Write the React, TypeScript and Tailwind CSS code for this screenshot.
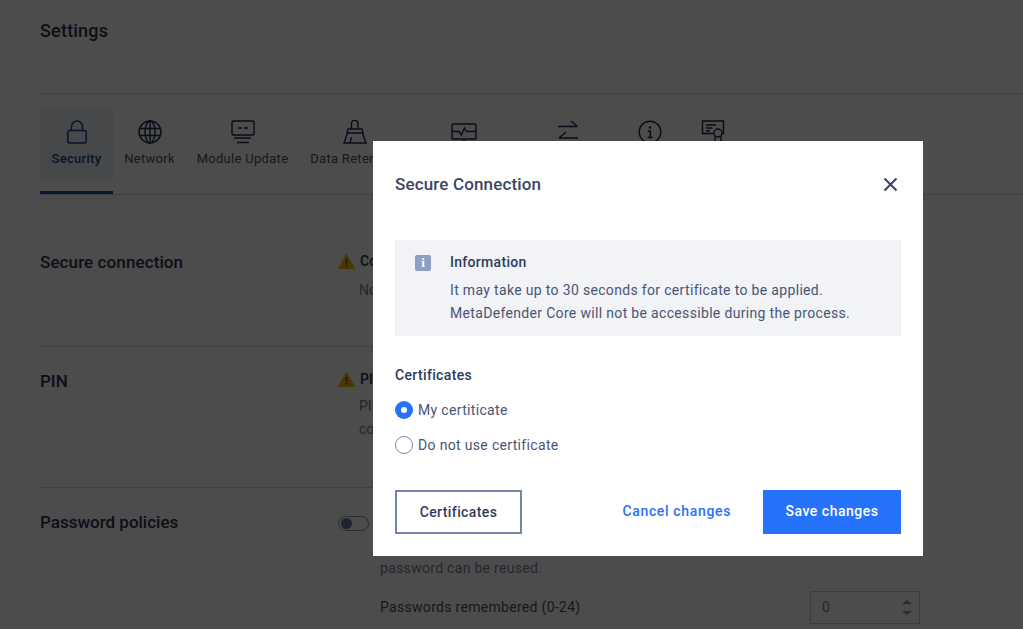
import type { ReactNode } from "react";

const font = "font-['Roboto',sans-serif]";

const LockIcon = () => (
  <svg width="24" height="24" viewBox="0 0 24 24" fill="none" stroke="currentColor" strokeWidth="1.5">
    <rect x="2.75" y="10.5" width="18.5" height="12.5" rx="2" />
    <path d="M6.5 10.5V6.500a5.500 5.500 0 0 1 11 0v4" />
  </svg>
);

const GlobeIcon = () => (
  <svg width="24" height="24" viewBox="0 0 24 24" fill="none" stroke="currentColor" strokeWidth="1.4">
    <circle cx="12" cy="12" r="11" />
    <ellipse cx="12" cy="12" rx="5" ry="11" />
    <path d="M12 1v22M1.500 8.500h21M1.500 15.500h21" />
  </svg>
);

const ModuleIcon = () => (
  <svg width="24" height="24" viewBox="0 0 24 24" fill="none" stroke="currentColor" strokeWidth="1.4">
    <rect x="1" y="1" width="22" height="14" rx="1" />
    <path d="M7 8h4M13 8h4M3 18h17M6 22.500h12" />
  </svg>
);

const BroomIcon = () => (
  <svg width="24" height="24" viewBox="0 0 24 24" fill="none" stroke="currentColor" strokeWidth="1.4">
    <path d="M8.500 9V3.500a3.200 3.200 0 0 1 6.400 0V9" />
    <path d="M5 9h14l1 4H4z" />
    <path d="M4.500 13 1 23h22l-3.500-10" />
    <path d="M7 23l1.500-6" />
  </svg>
);

const MonitorIcon = () => (
  <svg width="26" height="24" viewBox="0 0 26 24" fill="none" stroke="currentColor" strokeWidth="1.4">
    <rect x="1" y="4" width="24" height="15" rx="1" />
    <path d="M1 11.500h7l2.500 3.500 3-7 2 3.500h9.500" />
    <path d="M11 21h4" />
  </svg>
);

const SwapIcon = () => (
  <svg width="22" height="24" viewBox="0 0 22 24" fill="none" stroke="currentColor" strokeWidth="1.5">
    <path d="M1 6.500h19M14 1l6.500 5.500" />
    <path d="M21 18H2M9 12 2 18" />
  </svg>
);

const InfoCircleIcon = () => (
  <svg width="24" height="24" viewBox="0 0 24 24" fill="none" stroke="currentColor" strokeWidth="1.4">
    <circle cx="12" cy="12" r="10.800" />
    <circle cx="12" cy="7.500" r="1.200" fill="currentColor" stroke="none" />
    <path d="M9.800 11h2.500v6.500M9.500 17.500h5.200" strokeWidth="1.6" />
  </svg>
);

const CertificateIcon = () => (
  <svg width="24" height="24" viewBox="0 0 24 24" fill="none" stroke="currentColor" strokeWidth="1.4">
    <path d="M13 13.500H1.500V1h21v12.500H21" />
    <path d="M5 5h10M5 8h6.500M5 11h4" />
    <circle cx="17" cy="13" r="4" />
    <path d="M14 16v7M20 16v7" />
  </svg>
);

const WarningIcon = () => (
  <svg width="17" height="15" viewBox="0 0 17 15">
    <path d="M8.500 0.500 16.700 14.500H0.300z" fill="#fdb400" stroke="#fdb400" strokeLinejoin="round" />
    <path d="M8.500 5v4.500" stroke="#4d4d4d" strokeWidth="1.8" />
    <circle cx="8.500" cy="11.800" r="1" fill="#4d4d4d" />
  </svg>
);

const tabs: { label: string; width: string; icon: ReactNode; active?: boolean }[] = [
  { label: "Security", width: "w-[73px]", icon: <LockIcon />, active: true },
  { label: "Network", width: "w-[73px]", icon: <GlobeIcon /> },
  { label: "Module Update", width: "w-[113px]", icon: <ModuleIcon /> },
  { label: "Data Retention", width: "w-[112px]", icon: <BroomIcon /> },
  { label: "", width: "w-[106px]", icon: <MonitorIcon /> },
  { label: "", width: "w-[102px]", icon: <SwapIcon /> },
  { label: "", width: "w-[62px]", icon: <InfoCircleIcon /> },
  { label: "", width: "w-[64px]", icon: <CertificateIcon /> },
];

const SettingsPage = () => (
  <div className="pl-10 pt-[20px] text-[#2a3553]">
    <h1 className="text-[18px] leading-[22px] font-medium tracking-[0.2px]">Settings</h1>
    <div className="mt-[51px] border-t border-[#d4d8e0]" />
    <div className="mt-[15px] flex border-b border-[#d4d8e0]">
      {tabs.map((tab, i) => (
        <div key={i} className={`${tab.width} h-[85px] shrink-0 ${tab.active ? "border-b-[3px] border-[#1d4fb0] -mb-px" : ""}`}>
          <div className={`flex h-[70px] flex-col items-center pt-[11px] ${tab.active ? "bg-[#eef0f4] text-[#1d3f8c]" : "text-[#1f2b4d]"}`}>
            {tab.icon}
            <span className={`mt-[7px] whitespace-nowrap text-[13px] leading-[16px] tracking-[0.3px] ${tab.active ? "font-medium" : "text-[#4a5168]"}`}>
              {tab.label}
            </span>
          </div>
        </div>
      ))}
    </div>

    <div className="flex h-[152px] w-[880px] border-b border-[#d4d8e0] pt-[56px]">
      <div className="-mt-px w-[298px] text-[17px] leading-[24px] font-medium tracking-[0.1px]">Secure connection</div>
      <div>
        <div className="flex items-center gap-[5px] text-[14px] leading-[20px] font-medium">
          <WarningIcon />
          Config
        </div>
        <p className="mt-[8px] pl-[21px] text-[14px] leading-[23px] text-[#7a8296]">No certificate</p>
      </div>
    </div>

    <div className="flex h-[141px] w-[880px] border-b border-[#d4d8e0] pt-[22px]">
      <div className="w-[298px] text-[17px] leading-[24px] font-medium">PIN</div>
      <div>
        <div className="flex items-center gap-[5px] text-[14px] leading-[20px] font-medium">
          <WarningIcon />
          PIN
        </div>
        <p className="mt-[6px] pl-[21px] text-[14px] leading-[23px] text-[#7a8296]">
          PIN
          <br />
          code
        </p>
      </div>
    </div>

    <div className="flex w-[880px] pt-[23px]">
      <div className="-mt-px w-[298px] text-[17px] leading-[24px] font-medium">Password policies</div>
      <div className="flex-1">
        <div className="flex h-[24px] items-center">
          <div className="flex h-[15px] w-[31px] items-center rounded-full border border-[#8c94ad] pl-[2px]">
            <div className="h-[11px] w-[11px] rounded-full bg-[#6d7896]" />
          </div>
        </div>
        <div className="ml-[42px] mt-[23px]">
          <p className="text-[14px] leading-[20px] tracking-[0.3px] text-[#7a8296]">password can be reused.</p>
          <div className="mt-[13px] flex items-center justify-between">
            <span className="-mt-[2px] text-[14px] leading-[20px] tracking-[0.3px] text-[#4a5168]">Passwords remembered (0-24)</span>
            <div className="flex h-[33px] w-[110px] items-center justify-between border border-[#c6cad4] pl-[11px] pr-[7px]">
              <span className="text-[14px] text-[#7a8296]">0</span>
              <div className="flex flex-col gap-[7px]">
                <div className="h-0 w-0 border-x-[5px] border-b-[4px] border-x-transparent border-b-[#8c94ad]" />
                <div className="h-0 w-0 border-x-[5px] border-t-[4px] border-x-transparent border-t-[#8c94ad]" />
              </div>
            </div>
          </div>
        </div>
      </div>
    </div>
  </div>
);

const Radio = ({ checked, label }: { checked?: boolean; label: string }) => (
  <div className="flex items-center gap-[5px]">
    {checked ? (
      <div className="flex h-[18px] w-[18px] items-center justify-center rounded-full bg-[#2672fb]">
        <div className="h-[6px] w-[6px] rounded-full bg-white" />
      </div>
    ) : (
      <div className="h-[18px] w-[18px] rounded-full border border-[#7a88ad] bg-white" />
    )}
    <span className="text-[14px] leading-[18px] tracking-[0.33px] text-[#4a5573]">{label}</span>
  </div>
);

const SecureConnectionDialog = () => (
  <div className="flex h-[415px] w-[550px] flex-col bg-white px-[22px] text-[#2f3b5c]">
    <div className="flex h-[99px] shrink-0 items-start justify-between pt-[33px]">
      <h2 className="text-[17px] leading-[20px] font-medium tracking-[0.15px] text-[#3a4663]">Secure Connection</h2>
      <svg className="mr-[3px] mt-[3px]" width="15" height="15" viewBox="0 0 15 15" fill="none" stroke="#36436a" strokeWidth="2">
        <path d="M1.500 1.500l12 12M13.500 1.500l-12 12" />
      </svg>
    </div>

    <div className="flex h-[96px] shrink-0 bg-[#f2f3f7] pl-[20px] pt-[13px]">
      <div className="mr-[19px] mt-[2px] flex h-[16px] w-[16px] items-center justify-center rounded-[2px] bg-[#8f9fc4]">
        <span className="font-['Liberation_Serif',serif] text-[13px] font-bold leading-[16px] text-white">i</span>
      </div>
      <div>
        <div className="text-[14px] leading-[18px] font-medium tracking-[0.3px]">Information</div>
        <p className="mt-[8px] text-[14px] leading-[23px] tracking-[0.33px] text-[#4a5573]">
          It may take up to 30 seconds for certificate to be applied.
          <br />
          MetaDefender Core will not be accessible during the process.
        </p>
      </div>
    </div>

    <div className="mt-[30px] text-[14px] leading-[18px] font-medium tracking-[0.35px]">Certificates</div>
    <div className="mt-[17px] flex flex-col gap-[17px]">
      <Radio checked label="My certiticate" />
      <Radio label="Do not use certificate" />
    </div>

    <div className="mt-[36px] flex items-center justify-between">
      <button className="h-[44px] w-[127px] border-2 border-[#7584a8] text-[14px] font-medium tracking-[0.4px] text-[#2f3b5c]">
        Certificates
      </button>
      <div className="flex items-center gap-[32px]">
        <button className="-mt-[2px] text-[14px] font-medium tracking-[0.65px] text-[#2672fb]">Cancel changes</button>
        <button className="h-[44px] w-[138px] bg-[#2672fb] pb-[2px] text-[14px] font-medium tracking-[0.5px] text-white">Save changes</button>
      </div>
    </div>
  </div>
);

export default function App() {
  return (
    <div className={`relative h-[629px] w-[1023px] overflow-hidden bg-white ${font}`}>
      <SettingsPage />
      <div className="absolute inset-0 bg-black/70 pl-[373px] pt-[141px]">
        <SecureConnectionDialog />
      </div>
    </div>
  );
}
